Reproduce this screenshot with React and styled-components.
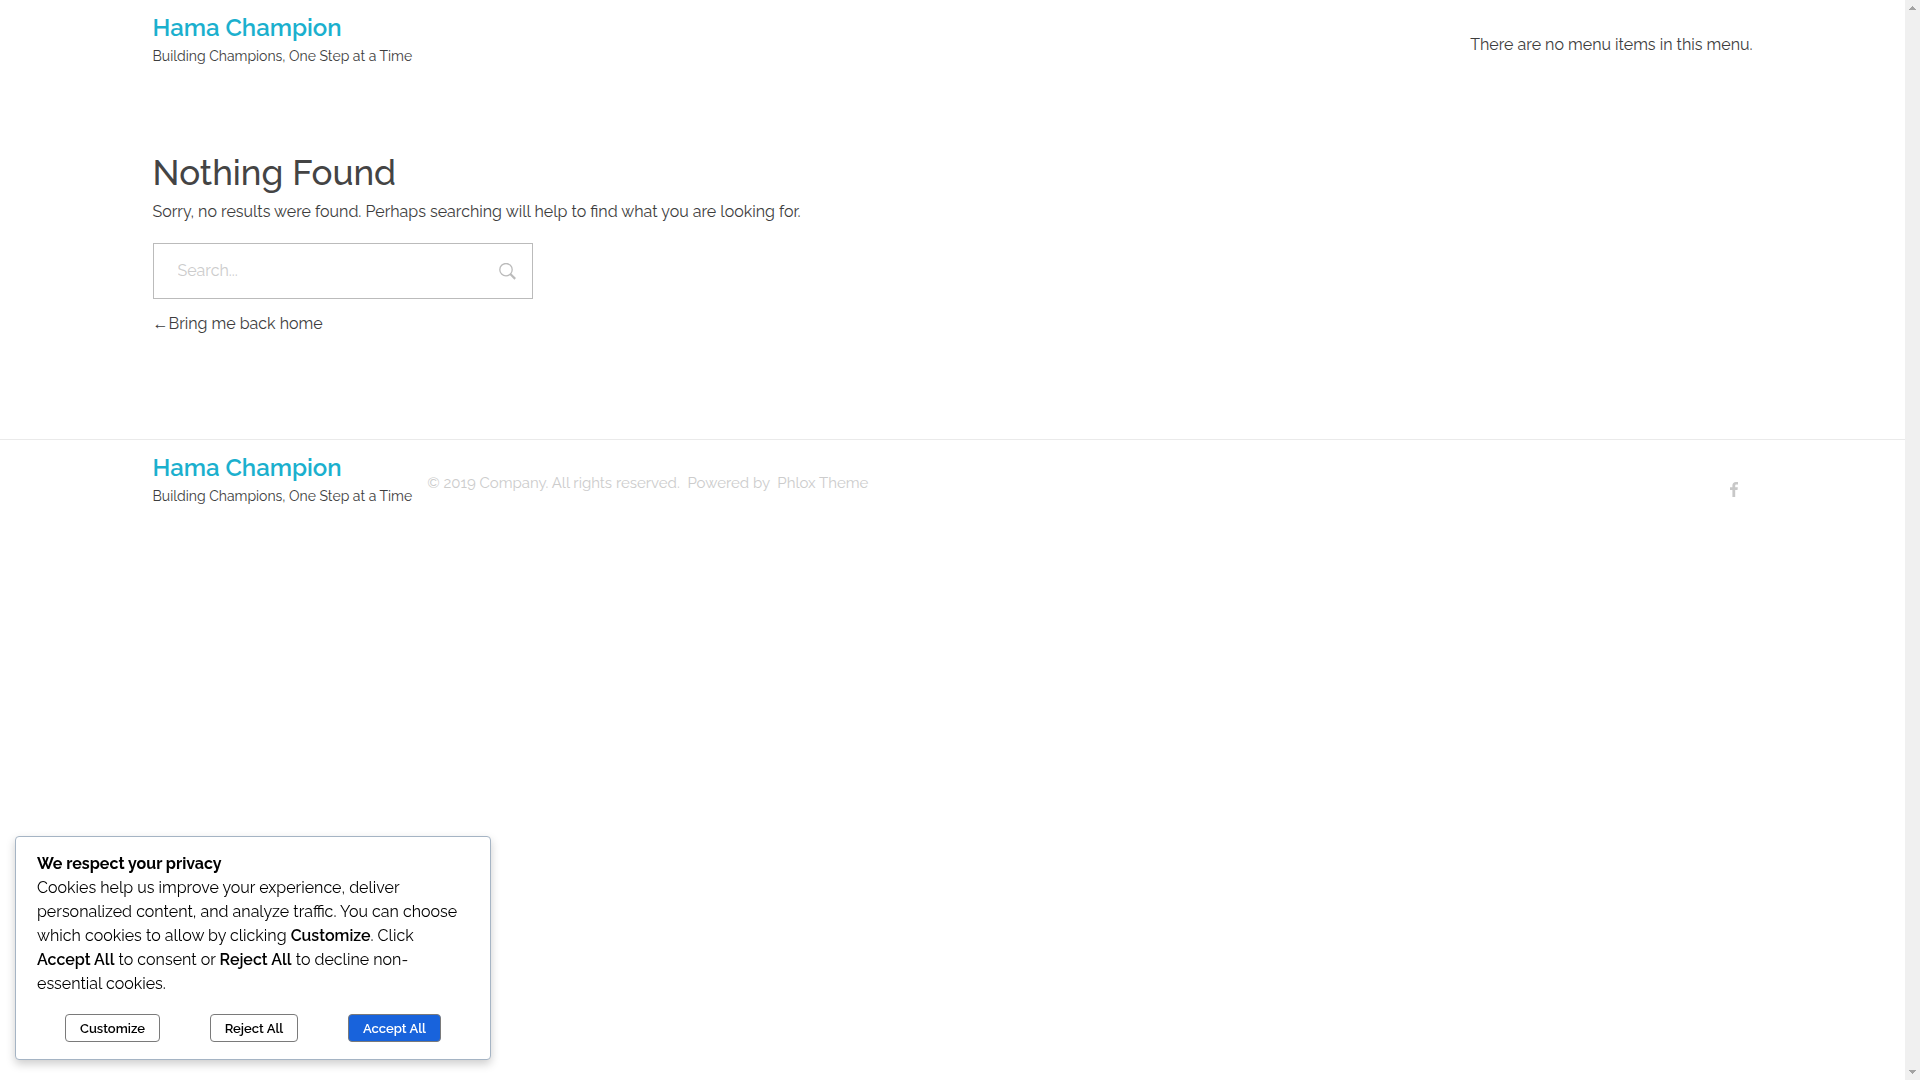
import React from "react";
import styled, { createGlobalStyle } from "styled-components";

const GlobalStyle = createGlobalStyle`
  *, *::before, *::after { box-sizing: border-box; }
  body {
    margin: 0;
    background: #fff;
    color: #3d3d3d;
    font: 400 16px/24px Raleway, Lato, sans-serif;
  }
  h1, h2, p { margin: 0; }
  a { color: inherit; text-decoration: none; }
`;

const Frame = styled.div`
  display: grid;
  grid-template-columns: minmax(0, 1fr) 15px;
  min-height: 100vh;
`;

const Page = styled.div`
  display: flex;
  flex-direction: column;
`;

const ScrollTrack = styled.div`
  position: sticky;
  top: 0;
  height: 100vh;
  padding: 6px 0;
  display: flex;
  flex-direction: column;
  justify-content: space-between;
  align-items: center;
  background: #f0f0f0;
`;

const Container = styled.div`
  width: 100%;
  max-width: 1600px;
  margin: 0 auto;
  display: flex;
  align-items: ${(p) => p.$align || "center"};
`;

const Header = styled.header`
  display: flex;
  height: 90px;
`;

const Brand = styled.div`
  display: flex;
  flex-direction: column;
  gap: 4px;
`;

const BrandName = styled.a`
  color: #1bb0ce;
  font-size: 24px;
  font-weight: 600;
  line-height: 32px;
`;

const Tagline = styled.p`
  font-size: 14px;
  line-height: 16px;
  color: #3d3d3d;
`;

const HeaderBrand = styled.div`
  flex: 1;
  padding-top: 12px;
  align-self: flex-start;
`;

const Main = styled.main`
  padding: 61px 0 103px;
`;

const Content = styled.section`
  display: flex;
  flex-direction: column;
  align-items: flex-start;
  flex: 1;
`;

const Title = styled.h1`
  color: #444;
  font-size: 35px;
  line-height: 44px;
  font-weight: 500;
  margin-bottom: 5px;
`;

const SearchForm = styled.form`
  width: 380px;
  max-width: 100%;
  height: 56px;
  margin: 19px 0 13px;
  display: flex;
  align-items: center;
  border: 1px solid #bbb;
`;

const SearchInput = styled.input`
  flex: 1;
  min-width: 0;
  height: 100%;
  padding: 0 24px 2px;
  border: 0;
  outline: 0;
  background: transparent;
  color: #3d3d3d;
  font: inherit;
  &::placeholder { color: #ccc; opacity: 1; }
`;

const SearchButton = styled.button`
  display: flex;
  padding: 0 16px;
  border: 0;
  background: none;
  color: #bbb;
  cursor: pointer;
`;

const HomeLink = styled.a`
  color: #3d3d3d;
`;

const Arrow = styled.span`
  font-family: "Liberation Serif", "Times New Roman", serif;
`;

const Footer = styled.footer`
  border-top: 1px solid #eaeaea;
  padding: 12px 0;
`;

const Copyright = styled.p`
  flex: 1;
  margin-left: 15px;
  padding-top: 19px;
  font-size: 15px;
  color: #ccc;
  white-space: pre-wrap;
`;

const SocialLink = styled.a`
  display: flex;
  padding: 30px 15px 0;
  color: #c8c8c8;
`;

const Consent = styled.aside`
  position: fixed;
  left: 15px;
  bottom: 20px;
  width: 476px;
  padding: 15px 21px 17px;
  border: 1px solid #a5b4c4;
  border-radius: 4px;
  background: #fff;
  color: #000;
  box-shadow: 0 4px 10px rgba(0, 0, 0, 0.2);
`;

const ConsentTitle = styled.h2`
  font-size: 16px;
  line-height: 24px;
  font-weight: 700;
`;

const ConsentText = styled.p`
  strong { font-weight: 600; }
`;

const ConsentActions = styled.div`
  display: flex;
  justify-content: space-between;
  margin-top: 18px;
  padding: 0 28px;
`;

const ConsentButton = styled.button`
  height: 28px;
  padding: 2px 14px 0;
  border: 1px solid #7a7a7a;
  border-radius: 4px;
  background: ${(p) => (p.$primary ? "#1863dc" : "#fff")};
  color: ${(p) => (p.$primary ? "#fff" : "#000")};
  font: 600 13px/16px Raleway, Lato, sans-serif;
  cursor: pointer;
`;

const SiteBrand = () => (
  <Brand>
    <BrandName href="#">Hama Champion</BrandName>
    <Tagline>Building Champions, One Step at a Time</Tagline>
  </Brand>
);

const ScrollArrow = ({ down }) => (
  <svg width="7" height="4" viewBox="0 0 7 4" shapeRendering="crispEdges" aria-hidden="true">
    <path d={down ? "M0 0h7v1h-1v1h-1v1h-1v1h-1v-1h-1v-1h-1v-1h-1z" : "M3 0h1v1h1v1h1v1h1v1h-7v-1h1v-1h1v-1h1z"} fill="#a3a3a3" />
  </svg>
);

export default function App() {
  return (
    <>
      <GlobalStyle />
      <Frame>
        <Page>
          <Header>
            <Container>
              <HeaderBrand>
                <SiteBrand />
              </HeaderBrand>
              <nav>There are no menu items in this menu.</nav>
            </Container>
          </Header>
          <Main>
            <Container>
              <Content>
                <Title>Nothing Found</Title>
                <p>Sorry, no results were found. Perhaps searching will help to find what you are looking for.</p>
                <SearchForm role="search" onSubmit={(e) => e.preventDefault()}>
                  <SearchInput type="text" placeholder="Search..." aria-label="Search" />
                  <SearchButton type="submit" aria-label="Submit search">
                    <svg width="17" height="17" viewBox="0 0 17 17" fill="none" stroke="currentColor" aria-hidden="true">
                      <circle cx="7" cy="6.700" r="6.200" strokeWidth="1.3" />
                      <path d="M11.3 11l4.900 4.900" strokeWidth="2.2" />
                    </svg>
                  </SearchButton>
                </SearchForm>
                <HomeLink href="#"><Arrow>←</Arrow>Bring me back home</HomeLink>
              </Content>
            </Container>
          </Main>
          <Footer>
            <Container $align="flex-start">
              <SiteBrand />
              <Copyright>
                {"© 2019 Company. All rights reserved.  Powered by  "}
                <a href="#">Phlox Theme</a>
              </Copyright>
              <SocialLink href="#" aria-label="Facebook">
                <svg width="8" height="15" viewBox="0 0 8 15" fill="currentColor" aria-hidden="true">
                  <path d="M8 0v2.600H6.600C5.500 2.600 5.200 3.100 5.200 3.900V5.300H7.800L7.500 7.900H5.200V15H2.400V7.900H0V5.300H2.400V3.500C2.400 1.200 3.800 0 5.900 0z" />
                </svg>
              </SocialLink>
            </Container>
          </Footer>
        </Page>
        <ScrollTrack aria-hidden="true">
          <ScrollArrow />
          <ScrollArrow down />
        </ScrollTrack>
      </Frame>
      <Consent aria-label="Cookie consent">
        <ConsentTitle>We respect your privacy</ConsentTitle>
        <ConsentText>
          Cookies help us improve your experience, deliver personalized content, and analyze traffic. You can
          choose which cookies to allow by clicking <strong>Customize</strong>. Click <strong>Accept All</strong> to
          consent or <strong>Reject All</strong> to decline non-essential cookies.
        </ConsentText>
        <ConsentActions>
          <ConsentButton type="button">Customize</ConsentButton>
          <ConsentButton type="button">Reject All</ConsentButton>
          <ConsentButton type="button" $primary>Accept All</ConsentButton>
        </ConsentActions>
      </Consent>
    </>
  );
}
